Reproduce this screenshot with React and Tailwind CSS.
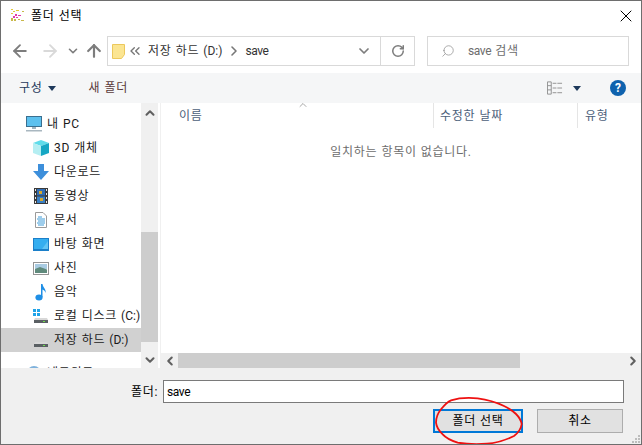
import React from 'react';
import { ArrowLeft, ArrowRight, ArrowUp, ChevronDown, ChevronLeft, ChevronRight, ChevronUp, ChevronsLeft, RotateCw, Search, X } from 'lucide-react';

function PcIcon() {
    return (
        <svg width="16" height="16" viewBox="0 0 16 16" className="shrink-0">
            <rect x="0.5" y="0.5" width="15" height="10" fill="#5cc0ee" stroke="#3a6f8f" />
            <rect x="6" y="11" width="4" height="2" fill="#9fb4c0" />
            <rect x="0" y="14" width="16" height="1.5" fill="#a9b7c0" />
        </svg>
    );
}

function CubeIcon() {
    return (
        <svg width="16" height="16" viewBox="0 0 16 16" className="shrink-0">
            <path d="M8 0 L16 3 L8 6 L0 3 Z" fill="#5fdcea" />
            <path d="M0 3 L8 6 V16 L0 13 Z" fill="#b5eef2" />
            <path d="M16 3 L8 6 V16 L16 13 Z" fill="#16a7c4" />
        </svg>
    );
}

function DownloadIcon() {
    return (
        <svg width="16" height="16" viewBox="0 0 16 16" className="shrink-0">
            <path d="M5 0 H11 V7 H16 L8 16 L0 7 H5 Z" fill="#3d8fdb" />
        </svg>
    );
}

function VideoIcon() {
    return (
        <svg width="14" height="16" viewBox="0 0 14 16" className="shrink-0">
            <rect width="14" height="16" fill="#3a3a3a" />
            <rect x="3" y="1" width="8" height="6.5" fill="#2f6db5" />
            <rect x="3" y="8.5" width="8" height="6.5" fill="#3a7fc4" />
            <rect x="5" y="3" width="3" height="3" fill="#d9a92c" />
            <rect x="6" y="10" width="3" height="3" fill="#d9a92c" />
            <path d="M1 1h1v2H1zM1 5h1v2H1zM1 9h1v2H1zM1 13h1v2H1zM12 1h1v2h-1zM12 5h1v2h-1zM12 9h1v2h-1zM12 13h1v2h-1z" fill="#e8e8e8" />
        </svg>
    );
}

function DocIcon() {
    return (
        <svg width="12" height="16" viewBox="0 0 12 16" className="shrink-0">
            <path d="M0.5 0.5 H8 L11.5 4 V15.5 H0.5 Z" fill="#fff" stroke="#9a9a9a" />
            <path d="M3 5h4M2 7h8M3 9h7M2 11h8M3 13h6" stroke="#3d9bd8" />
        </svg>
    );
}

function DesktopIcon() {
    return (
        <svg width="16" height="13" viewBox="0 0 16 13" className="shrink-0">
            <rect width="16" height="13" fill="#1b7fc9" />
            <rect x="1" y="1" width="14" height="10" fill="#35aef0" />
            <path d="M9 11 L15 3 V11 Z" fill="#62c4f4" />
        </svg>
    );
}

function PhotoIcon() {
    return (
        <svg width="16" height="13" viewBox="0 0 16 13" className="shrink-0">
            <rect x="0.5" y="0.5" width="15" height="12" fill="#fff" stroke="#949494" />
            <rect x="2" y="2" width="12" height="5" fill="#a9cbe2" />
            <path d="M2 7 L7 5 L14 7.5 V11 H2 Z" fill="#5f8a7c" />
        </svg>
    );
}

function MusicIcon() {
    return (
        <svg width="12" height="17" viewBox="0 0 12 17" className="shrink-0">
            <ellipse cx="4" cy="13.5" rx="3.6" ry="3" fill="#1f8fe6" />
            <path d="M6 13 V0 H7.5 C8 4 11.5 5 10.5 9 C10 6.5 8.5 6 7.5 5.5 V13 Z" fill="#1f8fe6" />
        </svg>
    );
}

function DriveIcon({ windows }) {
    return (
        <svg width="16" height="16" viewBox="0 0 16 16" className="shrink-0">
            {windows && <path d="M0 1h3v3H0zM4 1h3v3H4zM0 5h3v3H0zM4 5h3v3H4z" fill="#1fa3e8" />}
            <path d="M2 10 H14 L15 12 H1 Z" fill="#d8d8d8" />
            <rect x="1" y="12" width="14" height="3" fill="#5a5f63" />
            <rect x="10" y="13" width="2" height="1" fill="#6fe04a" />
        </svg>
    );
}

function NetworkIcon() {
    return (
        <svg width="16" height="16" viewBox="0 0 16 16" className="shrink-0">
            <circle cx="8" cy="8" r="7" fill="#7fb2dc" />
            <path d="M4 4 C7 6 6 10 9 13 C12 10 13 6 10 3 Z" fill="#c8dcea" />
        </svg>
    );
}

function SaveLogo() {
    return (
        <svg width="16" height="16" viewBox="0 0 16 16" className="shrink-0">
            <path d="M1 1h2v1H1zM3 3h2v1H3zM1 5h2v1H1zM6 2h3v1H6z" fill="#e2c93a" />
            <path d="M5 6h2v2H5zM8 7h3v1H8zM3 8h2v2H3zM6 9h2v1H6z" fill="#e23aa8" />
            <path d="M1 10h2v3H1zM4 11h2v2H4zM8 11h2v1H8zM12 3h2v1h-2zM11 12h3v1h-3z" fill="#c9b84a" />
        </svg>
    );
}

const places = [
    { label: '3D 개체', icon: <CubeIcon /> },
    { label: '다운로드', icon: <DownloadIcon /> },
    { label: '동영상', icon: <VideoIcon /> },
    { label: '문서', icon: <DocIcon /> },
    { label: '바탕 화면', icon: <DesktopIcon /> },
    { label: '사진', icon: <PhotoIcon /> },
    { label: '음악', icon: <MusicIcon /> },
    { label: <>로컬 디스크 <span className="tracking-normal">(C:)</span></>, icon: <DriveIcon windows /> },
];

function TreeRow({ icon, label, selected, indent = 'pl-[32px]' }) {
    return (
        <div className={`flex h-[24px] shrink-0 items-center ${indent} ${selected ? 'bg-[#d1d1d1]' : ''}`}>
            <span className="flex w-[16px] shrink-0 items-center justify-center">{icon}</span>
            <span className="ml-[5px] whitespace-nowrap">{label}</span>
        </div>
    );
}

export default function App() {
    return (
        <div
            className="relative flex h-[445px] w-[642px] flex-col overflow-hidden border border-[#6e6e6e] bg-white text-[12px] tracking-[0.7px] text-[#1a1a1a] [word-spacing:0.5px]"
            style={{ fontFamily: 'Roboto, "Noto Sans CJK KR", sans-serif' }}
        >
            {/* title bar */}
            <div className="flex h-[30px] shrink-0 items-center pl-[9px] pr-[5px]">
                <SaveLogo />
                <span className="ml-[5px] text-black">폴더 선택</span>
                <X className="ml-auto h-[20px] w-[20px] text-black" strokeWidth={1.2} />
            </div>

            {/* nav row */}
            <div className="flex h-[42px] shrink-0 items-start pl-[9px] pt-[5px]">
                <div className="flex h-[30px] w-[97px] shrink-0 items-center text-[#7d7d7d]">
                    <ArrowLeft className="h-[20px] w-[20px]" strokeWidth={2.2} />
                    <ArrowRight className="ml-[10px] h-[20px] w-[20px] text-[#d9d9d9]" strokeWidth={2.2} />
                    <ChevronDown className="ml-[6px] h-[14px] w-[14px]" strokeWidth={2.8} />
                    <ArrowUp className="ml-[4px] h-[20px] w-[20px]" strokeWidth={2.6} />
                </div>
                <div className="flex h-[30px] w-[308px] shrink-0 items-center border border-[#d9d9d9] text-[#333]">
                    <svg width="13" height="15" viewBox="0 0 13 15" className="ml-[4px] shrink-0">
                        <path d="M0.5 0.5 H12.5 V10.5 L9.5 14.5 H0.5 Z" fill="#fbe592" stroke="#ecc85c" />
                    </svg>
                    <ChevronsLeft className="ml-[2px] h-[16px] w-[16px] text-[#777]" strokeWidth={2} />
                    <span className="ml-[5px]">저장 하드 <span className="tracking-normal">(D:)</span></span>
                    <ChevronRight className="ml-[4px] h-[16px] w-[16px] text-[#777]" strokeWidth={2.4} />
                    <span className="ml-[3px] tracking-[-0.4px]">save</span>
                    <div className="ml-auto flex h-full items-center">
                        <ChevronDown className="mr-[8px] h-[16px] w-[16px] text-[#7d7d7d]" strokeWidth={2.6} />
                        <div className="flex h-full w-[34px] items-center justify-center border-l border-[#d9d9d9]">
                            <RotateCw className="h-[14px] w-[14px] text-[#7d7d7d]" strokeWidth={2.6} />
                        </div>
                    </div>
                </div>
                <div className="ml-[12px] flex h-[30px] w-[202px] shrink-0 items-center border border-[#d9d9d9] text-[#6d6d6d]">
                    <Search className="ml-[13px] h-[14px] w-[14px] -scale-x-100 text-[#8a8a8a]" strokeWidth={1.2} />
                    <span className="ml-[13px]"><span className="tracking-[-0.4px]">save</span> 검색</span>
                </div>
            </div>

            {/* toolbar */}
            <div className="flex h-[30px] shrink-0 items-center bg-[#f5f6f7] pl-[18px] pr-[15px] text-[#1e395b]">
                <span>구성</span>
                <span className="ml-[6px] h-0 w-0 border-x-[4px] border-t-[5px] border-x-transparent border-t-[#1e395b]" />
                <span className="ml-[32px] text-[#5a3a3a]">새 폴더</span>
                <svg width="16" height="14" viewBox="0 0 17 14" className="ml-auto shrink-0">
                    <path d="M0.5 0.5h4v13h-4zM0.5 4.5h4M0.5 9h4M6 2h4M11 2h5M6 7h4M11 7h5M6 12h4M11 12h5" fill="none" stroke="#8f8f8f" />
                </svg>
                <span className="ml-[10px] h-0 w-0 border-x-[4px] border-t-[5px] border-x-transparent border-t-[#1e395b]" />
                <span className="ml-[29px] flex h-[16px] w-[16px] items-center justify-center rounded-full bg-[#0f62ae] text-[12px] font-bold tracking-normal text-white">?</span>
            </div>

            {/* body */}
            <div className="flex min-h-0 flex-1">
                <div className="flex w-[140px] shrink-0 flex-col overflow-hidden pt-[9px] text-[#1a1a1a]">
                    <TreeRow icon={<PcIcon />} label="내 PC" indent="pl-[25px]" />
                    {places.map((place, index) => (
                        <TreeRow key={index} icon={place.icon} label={place.label} />
                    ))}
                    <TreeRow icon={<DriveIcon />} label={<>저장 하드 <span className="tracking-normal">(D:)</span></>} selected />
                    <div className="mt-[9px]">
                        <TreeRow icon={<NetworkIcon />} label="네트워크" indent="pl-[25px]" />
                    </div>
                </div>

                <div className="flex w-[17px] shrink-0 flex-col bg-[#f0f0f0]">
                    <div className="flex h-[20px] items-center justify-center">
                        <ChevronUp className="h-[14px] w-[14px] text-[#606060]" strokeWidth={3.5} />
                    </div>
                    <div className="mt-[109px] flex-1 bg-[#cdcdcd]" />
                    <div className="flex h-[26px] items-center justify-center pt-[10px]">
                        <ChevronDown className="h-[14px] w-[14px] text-[#606060]" strokeWidth={3.5} />
                    </div>
                </div>

                <div className="ml-[2px] flex min-w-0 flex-1 flex-col border-l border-[#f0f0f0]">
                    <div className="flex h-[25px] shrink-0 text-[#4c607a]">
                        <div className="relative flex w-[272px] items-center pl-[18px]">
                            이름
                            <ChevronUp className="absolute left-[136px] top-[-4px] h-[12px] w-[12px] text-[#8a8a8a]" strokeWidth={1.5} />
                        </div>
                        <div className="flex w-[144px] items-center border-l border-[#e5e5e5] pl-[6px]">수정한 날짜</div>
                        <div className="flex flex-1 items-center border-l border-[#e5e5e5] pl-[7px]">유형</div>
                    </div>
                    <div className="flex-1 pt-[15px] text-center text-[#6d6d6d]">일치하는 항목이 없습니다.</div>
                    <div className="flex h-[15px] shrink-0 items-center bg-[#f0f0f0]">
                        <div className="flex w-[17px] shrink-0 justify-center">
                            <ChevronLeft className="h-[14px] w-[14px] text-[#606060]" strokeWidth={3.5} />
                        </div>
                        <div className="h-full w-[342px] bg-[#cdcdcd]" />
                        <ChevronRight className="ml-auto mr-[1px] h-[14px] w-[14px] text-[#606060]" strokeWidth={3.5} />
                    </div>
                </div>
            </div>

            {/* footer */}
            <div className="relative h-[76px] shrink-0 bg-[#f0f0f0]">
                <div className="flex items-center pt-[12px]">
                    <span className="ml-[130px] w-[27px] whitespace-nowrap text-black">폴더:</span>
                    <div className="ml-[5px] flex h-[23px] w-[461px] items-center border border-[#7a7a7a] bg-white pl-[3px] text-black">
                        <span className="tracking-[-0.4px]">save</span>
                    </div>
                </div>
                <div className="mt-[6px] flex justify-end pr-[18px]">
                    <div className="flex h-[24px] w-[90px] items-center justify-center border-2 border-[#0078d7] bg-[#e1e1e1] text-black">폴더 선택</div>
                    <div className="ml-[14px] flex h-[24px] w-[86px] items-center justify-center border border-[#adadad] bg-[#e1e1e1] text-black">취소</div>
                </div>
                <svg width="10" height="10" viewBox="0 0 10 10" className="absolute bottom-[0px] right-[0px]">
                    <path d="M7 1h2v2H7zM4 4h2v2H4zM7 4h2v2H7zM1 7h2v2H1zM4 7h2v2H4zM7 7h2v2H7z" fill="#bdbdbd" />
                </svg>
            </div>

            {/* red marker circle drawn over the button */}
            <svg className="pointer-events-none absolute left-[432px] top-[395px]" width="90" height="50" viewBox="0 0 90 50" fill="none">
                <path d="M18 4.3 C27 1.5 36 1.5 44.7 2.3 C54 3.5 63 6 71 10 C76 12.5 80 15 83 18 C86 21 88 24 88.7 28 C88 33 85 37 81 40 C73 44 63 47 54 47.7 C44 48.5 33 48 24.7 46.7 C18 44.5 13 42 9.7 38.3 C6 35 3.5 31 3 26.7 C3 21 5 17 8 13.3 C11 9.5 14 6 18 4.3" stroke="#ee1111" strokeWidth="1.8" />
            </svg>
        </div>
    );
}
